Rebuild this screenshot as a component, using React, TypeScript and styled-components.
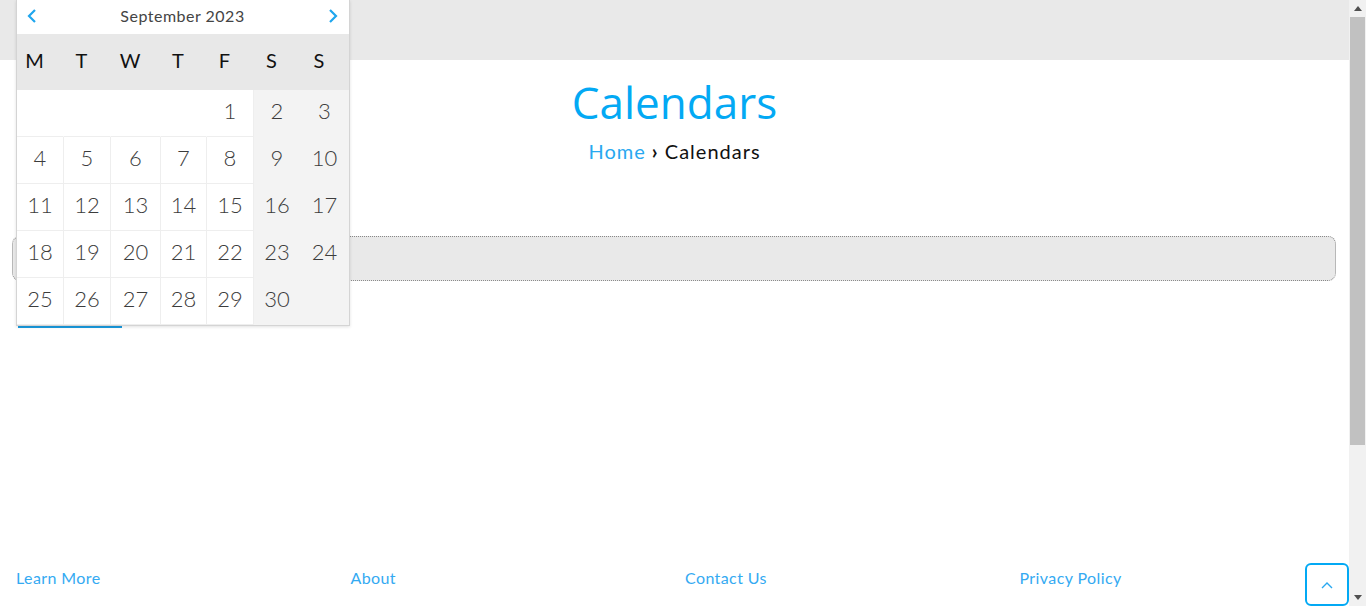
import * as React from 'react'
import styled, { createGlobalStyle } from 'styled-components'

const GlobalStyle = createGlobalStyle`
  html, body {
    margin: 0;
    padding: 0;
    background: #fff;
    font-family: Lato, "Noto Sans", sans-serif;
  }
  * { box-sizing: border-box; }
`

const Page = styled.div`
  position: relative;
  width: calc(100% - 17px);
  min-height: 100vh;
  display: flex;
  flex-direction: column;
`

const TopBar = styled.header`
  height: 60px;
  background: #e9e9e9;
`

const Hero = styled.section`
  display: flex;
  flex-direction: column;
  align-items: center;
  padding-top: 15px;
`

const Title = styled.h1`
  margin: 0;
  font-family: "Open Sans", "Noto Sans", sans-serif;
  font-weight: 400;
  font-size: 44px;
  line-height: 54px;
  color: #03a9f4;
`

const Crumbs = styled.nav`
  margin-top: 9px;
  font-size: 20px;
  line-height: 26px;
  color: #111;
  letter-spacing: 1px;
`

const CrumbLink = styled.a`
  color: #29a8f0;
  text-decoration: none;
`

const Main = styled.main`
  padding: 72px 13px 0 12px;
  flex: 1;
`

const InputBar = styled.div`
  height: 45px;
  border: 1px dotted #888;
  border-radius: 8px;
  background: #e9e9e9;
`

const Underline = styled.div`
  margin: 45px 0 0 6px;
  width: 104px;
  height: 2px;
  background: #1a9be0;
`

const Footer = styled.footer`
  display: grid;
  grid-template-columns: repeat(4, 334.5px);
  padding: 6px 0 0 16px;
  height: 44px;
`

const FooterLink = styled.a`
  color: #34aaf2;
  font-size: 16px;
  line-height: 20px;
  letter-spacing: 0.4px;
  text-decoration: none;
`

const Popup = styled.div`
  position: absolute;
  top: 0;
  left: 16px;
  width: 334px;
  background: #fff;
  border: 1px solid #d4d4d4;
  border-top: none;
  box-shadow: 0 1px 3px rgba(0, 0, 0, 0.12);
`

const MonthRow = styled.div`
  height: 34px;
  display: flex;
  align-items: center;
  justify-content: space-between;
  padding: 0 10px 2px 9px;
  font-size: 16px;
  line-height: 20px;
  color: #444;
  letter-spacing: 0.5px;
`

const NavButton = styled.button`
  border: none;
  background: none;
  padding: 0;
  display: flex;
  align-items: center;
  cursor: pointer;
`

const Grid = styled.div`
  display: grid;
  grid-template-columns: 47px 47px 50px 46px 47px 47px 1fr;
`

const WeekDay = styled.div`
  height: 56px;
  display: flex;
  align-items: center;
  justify-content: center;
  padding: 0 12px 4px 0;
  background: #e8e8e8;
  font-size: 20px;
  color: #111;
`

const Day = styled.div<{ $weekend: boolean; $empty?: boolean }>`
  height: 47px;
  display: flex;
  align-items: center;
  justify-content: center;
  padding-bottom: 5px;
  font-size: 22px;
  font-weight: 300;
  color: #3c3c3c;
  background: ${p => (p.$weekend ? '#f3f3f3' : '#fff')};
  border-right: 1px solid ${p => (p.$weekend || p.$empty ? 'transparent' : '#eeeeee')};
  border-bottom: 1px solid ${p => (p.$weekend ? 'transparent' : '#eeeeee')};
`

const TopButton = styled.button`
  position: fixed;
  right: 17px;
  bottom: 0;
  width: 44px;
  height: 43px;
  border: 2px solid #03a9f4;
  border-radius: 6px;
  background: #fff;
  display: flex;
  align-items: center;
  justify-content: center;
  padding: 0;
`

const ScrollTrack = styled.div`
  position: fixed;
  top: 0;
  right: 0;
  width: 17px;
  height: 100vh;
  background: #f1f1f1;
  display: flex;
  flex-direction: column;
  align-items: center;
`

const ScrollArrow = styled.div<{ $down?: boolean }>`
  height: 17px;
  width: 17px;
  display: flex;
  align-items: center;
  justify-content: center;
  margin-top: ${p => (p.$down ? 'auto' : '0')};
`

const ScrollThumb = styled.div`
  width: 15px;
  height: 428px;
  background: #c1c1c1;
`

const Chevron = ({ dir }: { dir: 'left' | 'right' }) => (
  <svg width="12" height="16" viewBox="0 0 12 16">
    <path
      d={dir === 'left' ? 'M9 2 L3 8 L9 14' : 'M3 2 L9 8 L3 14'}
      fill="none"
      stroke="#1fa6ee"
      strokeWidth="2.2"
    />
  </svg>
)

const days: (number | null)[] = [
  null, null, null, null, 1, 2, 3,
  ...Array.from({ length: 27 }, (_, i) => i + 4),
  null,
]

export default function App() {
  return (
    <>
      <GlobalStyle />
      <Page>
        <TopBar />
        <Hero>
          <Title>Calendars</Title>
          <Crumbs>
            <CrumbLink href="#">Home</CrumbLink> <b>›</b> Calendars
          </Crumbs>
        </Hero>
        <Main>
          <InputBar />
          <Underline />
        </Main>
        <Footer>
          <FooterLink href="#">Learn More</FooterLink>
          <FooterLink href="#">About</FooterLink>
          <FooterLink href="#">Contact Us</FooterLink>
          <FooterLink href="#">Privacy Policy</FooterLink>
        </Footer>

        <Popup>
          <MonthRow>
            <NavButton><Chevron dir="left" /></NavButton>
            <span>September 2023</span>
            <NavButton><Chevron dir="right" /></NavButton>
          </MonthRow>
          <Grid>
            {['M', 'T', 'W', 'T', 'F', 'S', 'S'].map((d, i) => (
              <WeekDay key={i}>{d}</WeekDay>
            ))}
            {days.map((d, i) => (
              <Day key={i} $weekend={i % 7 >= 5} $empty={d === null}>
                {d}
              </Day>
            ))}
          </Grid>
        </Popup>

        <TopButton aria-label="Back to top">
          <svg width="14" height="10" viewBox="0 0 14 10">
            <path d="M2 8 L7 3 L12 8" fill="none" stroke="#29a8f0" strokeWidth="1.4" />
          </svg>
        </TopButton>
      </Page>

      <ScrollTrack>
        <ScrollArrow>
          <svg width="8" height="5" viewBox="0 0 8 5"><path d="M0 5 L4 0 L8 5 Z" fill="#505050" /></svg>
        </ScrollArrow>
        <ScrollThumb />
        <ScrollArrow $down>
          <svg width="8" height="5" viewBox="0 0 8 5"><path d="M0 0 L4 5 L8 0 Z" fill="#505050" /></svg>
        </ScrollArrow>
      </ScrollTrack>
    </>
  )
}
